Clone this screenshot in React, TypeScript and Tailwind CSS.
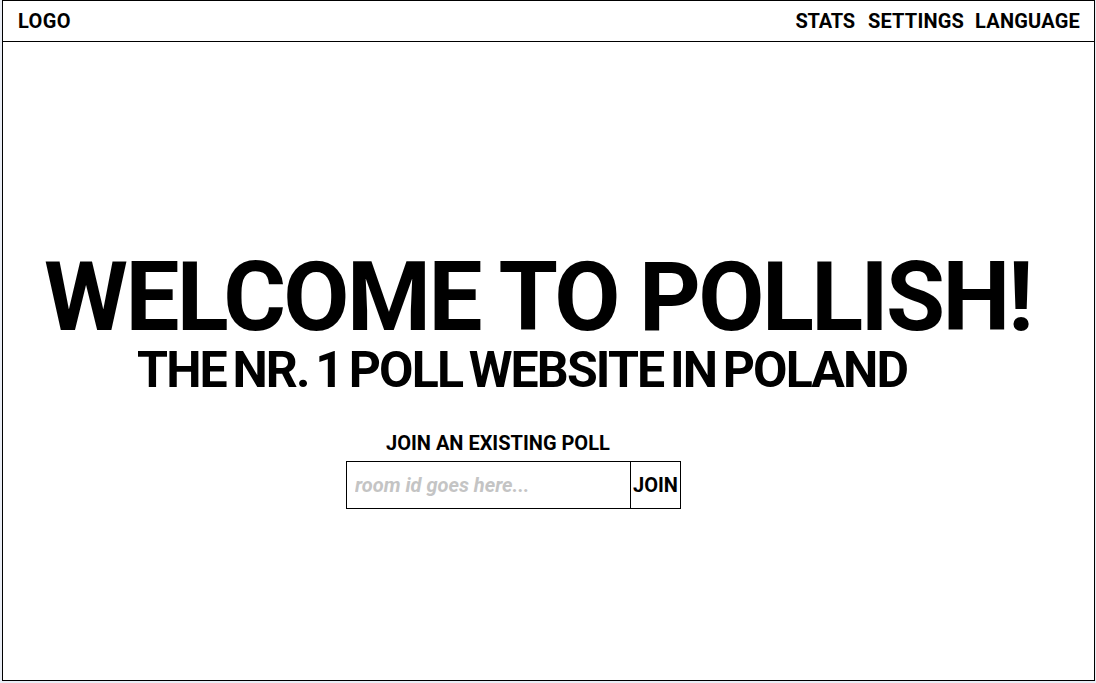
export default function App() {
  return (
    <div className="w-[1096px] h-[683px] bg-[#e9edf5] pl-[2px] font-['Roboto',sans-serif] text-black">
      <div className="w-[1093px] h-[681px] border border-black bg-white flex flex-col">
        {/* Header */}
        <header className="h-[41px] border-b border-black flex items-center justify-between pl-[15px] pr-[14px] shrink-0">
          <a href="#" className="text-[20px] leading-5 font-bold tracking-[0.02em]">LOGO</a>
          <nav className="flex items-center gap-[11px] text-[20px] leading-5 font-bold tracking-[0.01em]">
            <a href="#" className="mr-[2px] tracking-[-0.01em]">STATS</a>
            <a href="#">SETTINGS</a>
            <a href="#">LANGUAGE</a>
          </nav>
        </header>

        <main className="flex flex-col items-start pt-[207px]">
          <h1 className="ml-[41px] text-[96px] leading-none font-bold tracking-[-0.027em] whitespace-nowrap">
            WELCOME TO POLLISH!
          </h1>
          <h2 className="ml-[134px] text-[50px] leading-none font-bold tracking-[-0.037em] [word-spacing:-4px] whitespace-nowrap">
            THE NR. 1 POLL WEBSITE IN POLAND
          </h2>

          <p className="ml-[383px] mt-[38px] text-[20px] leading-5 font-bold">JOIN AN EXISTING POLL</p>
          <form className="ml-[343px] mt-[8px] flex h-[48px] w-[335px] border border-black" onSubmit={(e) => e.preventDefault()}>
            <input
              type="text"
              placeholder="room id goes here..."
              className="w-[283px] h-full px-2 text-[20px] font-bold italic outline-none placeholder:text-[#c4c4c4]"
            />
            <button type="submit" className="flex-1 border-l border-black text-[20px] font-bold">
              JOIN
            </button>
          </form>
        </main>
      </div>
    </div>
  );
}
